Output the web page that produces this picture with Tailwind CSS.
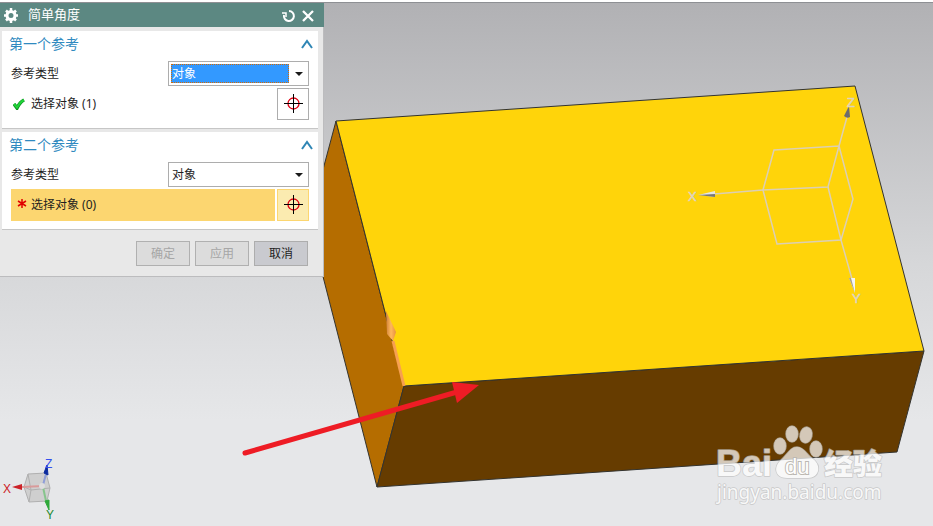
<!DOCTYPE html>
<html lang="zh-CN">
<head>
  <meta charset="UTF-8">
  <meta name="viewport" content="width=device-width, initial-scale=1.0">
  <title>简单角度</title>
  <script src="https://cdn.jsdelivr.net/npm/@tailwindcss/browser@4"></script>
</head>
<body class="bg-white text-xs text-[#1e1e1e] font-['Noto_Sans','Noto_Sans_CJK_SC',sans-serif]">
  <main class="relative min-h-screen overflow-hidden border-t-2 border-white">

    <!-- 3D viewport -->
    <svg class="absolute inset-0 w-full h-full" viewBox="0 2 933 524" preserveAspectRatio="xMinYMin slice">
      <defs>
        <linearGradient id="sky" x1="0" y1="0" x2="0" y2="1">
          <stop offset="0" stop-color="#b1b1b4"/>
          <stop offset="0.5" stop-color="#d6d7d9"/>
          <stop offset="0.8" stop-color="#e6e7e9"/>
          <stop offset="1" stop-color="#e6e7e9"/>
        </linearGradient>
        <linearGradient id="cone" x1="0" y1="0" x2="1" y2="0">
          <stop offset="0" stop-color="#d08038"/>
          <stop offset="0.5" stop-color="#ffb85c"/>
          <stop offset="1" stop-color="#e89040"/>
        </linearGradient>
      </defs>
      <rect x="0" y="2" width="933" height="524" fill="url(#sky)"/>
      <path d="M0 2.5H933" stroke="#8e9094"/>

      <!-- block -->
      <g stroke="#33332f" stroke-width="1" stroke-linejoin="round">
        <path d="M336 121L404 386L377 487L309 222Z" fill="#b56d00"/>
        <path d="M404 386L924 351L897 452L377 487Z" fill="#663c00"/>
        <path d="M336 121L855 86L924 351L404 386Z" fill="#ffd40a"/>
      </g>

      <!-- selected edge -->
      <path d="M393 341L404 386" stroke="#f7a050" stroke-width="3" fill="none"/>
      <path d="M386 311L396 332L393 341L387 334Z" fill="url(#cone)"/>

      <!-- datum csys -->
      <g fill="none" stroke="#dccfb4" stroke-width="1.500">
        <path d="M774 150L839 146L828 187L763 190Z"/>
        <path d="M763 190L777 244L841 240L828 187"/>
        <path d="M839 146L853 199L841 240"/>
        <path d="M763 190L714 194M839 146L847 117M841 240L852 279"/>
      </g>
      <path d="M698 195L715 191V197Z" fill="#e6e6e6"/>
      <path d="M698 195L715 194V197Z" fill="#777"/>
      <path d="M849 106L844 116Q847 119 850 117Z" fill="#6d6d6d"/>
      <path d="M849 278L855 278L855 293Z" fill="#f4f4f4"/>
      <path d="M849 278L851 278L855 293Z" fill="#a9a18a"/>
      <g fill="#dcd3c0" stroke="#dcd3c0" stroke-width="0.500" font-family="Liberation Sans, sans-serif" font-size="13">
        <text x="688" y="201">X</text>
        <text x="847" y="107">Z</text>
        <text x="852" y="303">Y</text>
      </g>

      <!-- pointer arrow -->
      <path d="M245 453L457 392" stroke="#ee1c25" stroke-width="5" stroke-linecap="round"/>
      <path d="M452 382L479 385L457 403Z" fill="#ee1c25"/>

      <!-- view triad -->
      <path d="M28 474L46 473L50 488L47 501L29 502L24 487Z" fill="#cfcfcf" stroke="#b0b0b0"/>
      <path d="M24 487L31 490L50 488M31 490L29 502M28 474L31 490M46 473L43 485" fill="none" stroke="#b0b0b0"/>
      <path d="M43 486L22 487" stroke="#d99a9a" stroke-width="2"/>
      <path d="M43 485L46 474" stroke="#8f9ed8" stroke-width="2"/>
      <path d="M43 487L46 501" stroke="#86c48c" stroke-width="2"/>
      <circle cx="42" cy="486" r="3" fill="#dedede"/>
      <path d="M12 487L22 484V490Z" fill="#cc2228"/>
      <path d="M47 465L44 473L48 475Z" fill="#0b2a9e" stroke="#0b2a9e"/>
      <path d="M49 510L45 501L49 500Z" fill="#2fa83a" stroke="#2fa83a"/>
      <g font-family="Liberation Sans, sans-serif" font-size="12">
        <text x="3" y="493" fill="#cc2228">X</text>
        <text x="45" y="468" fill="#3450ee">Z</text>
        <text x="46" y="519" fill="#238a2d">Y</text>
      </g>

      <!-- watermark -->
      <g fill="#fff" stroke="#bdbdbd" stroke-width="1.500" paint-order="stroke" stroke-linejoin="round" opacity="0.720">
        <ellipse cx="780" cy="446" rx="6" ry="8"/>
        <ellipse cx="792" cy="434" rx="6" ry="8"/>
        <ellipse cx="806" cy="435" rx="6" ry="8" transform="rotate(12 806 435)"/>
        <ellipse cx="816" cy="449" rx="6" ry="8"/>
        <path d="M797 447C804 447 807 455 813 459C822 466 819 478 808 478C802 478 792 478 787 478C775 478 773 467 781 460C787 455 790 447 797 447Z"/>
        <text x="716" y="476" font-family="Liberation Sans, sans-serif" font-weight="700" font-size="36">Bai</text>
        <text x="824" y="475" font-family="Noto Sans CJK SC, sans-serif" font-weight="900" font-size="29">经验</text>
        <text x="717" y="499" font-family="Noto Sans, sans-serif" font-size="19">jingyan.baidu.com</text>
      </g>
      <text x="785" y="474" font-family="Liberation Sans, sans-serif" font-size="22" fill="#fff" stroke="#bcb8b2" stroke-width="2" paint-order="stroke">du</text>
    </svg>

    <!-- dialog -->
    <form class="relative mt-px w-[324px] border-r border-b border-[#bcbcbe] bg-[#e8e8e8]">
      <header class="flex h-6 items-center bg-[#5c8882] pl-[3px] pr-2 -mr-px text-white">
        <svg class="size-4" viewBox="0 0 16 16" fill="none" stroke="#fff">
          <circle cx="8" cy="8.500" r="4" stroke-width="3"/>
          <path d="M8 1V4M8 13V16M1 8.500H3M13 8.500H15M3 3.500L5 5.500M11 11.500L13 13.500M13 3.500L11 5.500M5 11.500L3 13.500" stroke-width="2.500"/>
        </svg>
        <h1 class="ml-[9px] flex-1 text-[13px]">简单角度</h1>
        <button type="button" aria-label="重置" class="mr-1">
          <svg class="size-4" viewBox="0 0 16 16" fill="none" stroke="#fff" stroke-width="2">
            <path d="M9 4A5 5 0 1 1 4 8"/>
            <path d="M2 6H6V10" stroke-width="1.500"/>
          </svg>
        </button>
        <button type="button" aria-label="关闭">
          <svg class="size-4" viewBox="0 0 16 16" fill="none" stroke="#fff" stroke-width="2.300">
            <path d="M3 4L13 14M13 4L3 14"/>
          </svg>
        </button>
      </header>

      <div class="flex flex-col gap-[3px] pt-1 pl-0.5 pr-[5px]">
        <section class="border-b border-[#c6c6c6] bg-white px-[9px] pb-2">
          <div class="-ml-0.5 flex h-[30px] items-start justify-between pt-[3px]">
            <h2 class="text-sm text-[#2f8ac0]">第一个参考</h2>
            <button type="button" aria-label="折叠第一个参考" class="-mr-1 mt-1">
              <svg class="h-3 w-3" viewBox="0 0 12 12" fill="none" stroke="#2f86b5" stroke-width="2"><path d="M1 10L6 3L11 10"/></svg>
            </button>
          </div>
          <div class="flex items-center justify-between">
            <label for="type1">参考类型</label>
            <div class="relative h-[25px] w-[141px] border border-[#adadad] bg-white py-0.5 pl-0.5 pr-[19px]">
              <select id="type1" class="block h-[19px] w-full appearance-none border border-dotted border-[#d86a00] bg-[#3399ff] text-white outline-none">
                <option>对象</option>
              </select>
              <svg class="pointer-events-none absolute right-[5px] top-2 h-2 w-2" viewBox="0 0 8 8"><path d="M0 2H8L4 6Z" fill="#1a1a1a"/></svg>
            </div>
          </div>
          <div class="mt-0.5 flex items-center gap-0.5">
            <div class="flex h-8 flex-1 items-center pl-0.5">
              <svg class="h-3 w-3" viewBox="0 0 12 12" fill="none"><path d="M1 6L4 10Q7 4 11 2" stroke="#0b8f1e" stroke-width="3.500"/><path d="M1 6L4 9.500Q7 4 11 2" stroke="#20d238" stroke-width="2"/></svg>
              <span class="ml-1.5">选择对象 (1)</span>
            </div>
            <button type="button" aria-label="选择对象" class="flex size-8 items-center justify-center border border-[#adadad] bg-white">
              <svg class="size-5" viewBox="0 0 20 20" fill="none"><circle cx="10.500" cy="9.500" r="5.500" stroke="#e00012" stroke-width="1.300"/><path d="M10.500 0V19M1 9.500H20" stroke="#000"/></svg>
            </button>
          </div>
        </section>

        <section class="border-b border-[#c6c6c6] bg-white px-[9px] pb-2">
          <div class="-ml-0.5 flex h-[30px] items-start justify-between pt-[3px]">
            <h2 class="text-sm text-[#2f8ac0]">第二个参考</h2>
            <button type="button" aria-label="折叠第二个参考" class="-mr-1 mt-1">
              <svg class="h-3 w-3" viewBox="0 0 12 12" fill="none" stroke="#2f86b5" stroke-width="2"><path d="M1 10L6 3L11 10"/></svg>
            </button>
          </div>
          <div class="flex items-center justify-between">
            <label for="type2">参考类型</label>
            <div class="relative h-[25px] w-[141px] border border-[#adadad] bg-white py-0.5 pl-0.5 pr-[19px]">
              <select id="type2" class="block h-[19px] w-full appearance-none border border-transparent outline-none">
                <option>对象</option>
              </select>
              <svg class="pointer-events-none absolute right-[5px] top-2 h-2 w-2" viewBox="0 0 8 8"><path d="M0 2H8L4 6Z" fill="#1a1a1a"/></svg>
            </div>
          </div>
          <div class="mt-0.5 flex items-center gap-0.5">
            <div class="flex h-8 flex-1 items-center bg-[#fcd670] pl-1.5">
              <svg class="h-3 w-2.5" viewBox="0 0 10 12" fill="none" stroke="#e00000" stroke-width="1.500"><path d="M5 0V9M1 2L9 7M9 2L1 7"/></svg>
              <span class="ml-1">选择对象 (0)</span>
            </div>
            <button type="button" aria-label="选择对象" class="flex size-8 items-center justify-center border border-[#fcd670] bg-[#fbebb0]">
              <svg class="size-5" viewBox="0 0 20 20" fill="none"><circle cx="10.500" cy="9.500" r="5.500" stroke="#e00012" stroke-width="1.300"/><path d="M10.500 0V19M1 9.500H20" stroke="#000"/></svg>
            </button>
          </div>
        </section>
      </div>

      <footer class="flex justify-end gap-[5px] pt-[11px] pr-[15px] pb-2.5">
        <button type="button" disabled class="h-[25px] w-[54px] border border-[#b0b0b0] bg-[#dcdcdc] text-[#a6a6a6]">确定</button>
        <button type="button" disabled class="h-[25px] w-[54px] border border-[#b0b0b0] bg-[#dcdcdc] text-[#a6a6a6]">应用</button>
        <button type="button" class="h-[25px] w-[54px] border border-[#adadad] bg-[#c9cacf]">取消</button>
      </footer>
    </form>
  </main>
</body>
</html>
